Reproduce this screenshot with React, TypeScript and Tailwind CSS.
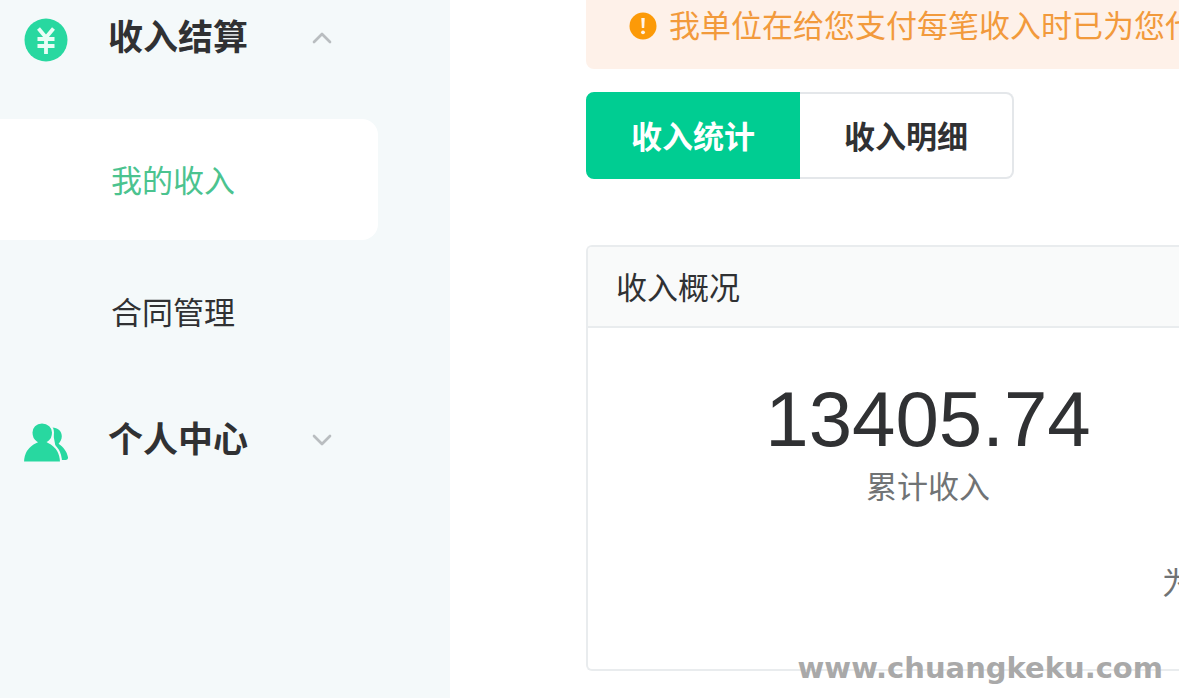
import { useState } from 'react';
import { ChevronDown, ChevronUp } from 'lucide-react';

const TABS = ['收入统计', '收入明细'];
const INCOME_ITEMS = ['我的收入', '合同管理'];

function YenIcon() {
  return (
    <svg className="size-11" viewBox="0 0 44 44" fill="none" aria-hidden="true">
      <circle cx="22" cy="22" r="21.5" fill="#28d8a0" />
      <path
        d="M14.5 10.5 22 19.5 29.5 10.5M22 19v17M13.5 21h17M13.5 28h17"
        stroke="#e9fdf6"
        strokeWidth="3.8"
      />
    </svg>
  );
}

function PeopleIcon() {
  return (
    <svg className="size-11" viewBox="0 0 44 44" fill="#28d8a0" aria-hidden="true">
      <path d="M28 7.5c6 0 9.8 3.8 9.8 8.8 0 3.4-1.6 5.600-3.200 7.400 4.400 3 8.400 7.600 9.400 13.600.2 1.600-.8 2.700-2.400 2.700H34Z" />
      {/* front figure, outlined in the sidebar colour so it stands off the back one */}
      <path
        d="M18 2.500c-6.500 0-10.500 4.500-10.500 10 0 4 1.500 7.500 4.500 9.500C4.500 25.500-1 32-1 42.500h38C37 32 31.500 25.500 24.500 22c3-2 4.500-5.500 4.500-9.500 0-5.500-4.500-10-11-10Z"
        stroke="#f4f9fa"
        strokeWidth="2"
      />
    </svg>
  );
}

function AlertIcon() {
  return (
    <svg className="size-7 shrink-0" viewBox="0 0 28 28" aria-hidden="true">
      <circle cx="14" cy="14" r="13.5" fill="#fc9a08" />
      <path d="M12.3 6h3.400l-.5 10h-2.400Z" fill="#fff3e6" />
      <circle cx="14" cy="20.3" r="1.9" fill="#fff3e6" />
    </svg>
  );
}

export default function App() {
  const [incomeOpen, setIncomeOpen] = useState(true);
  const [item, setItem] = useState(INCOME_ITEMS[0]);
  const [tab, setTab] = useState(TABS[0]);

  return (
    <div className="relative flex min-h-screen overflow-hidden bg-white font-['Liberation_Sans','Noto_Sans_CJK_SC',sans-serif] text-[#303133]">
      <aside className="w-[450px] shrink-0 bg-[#f4f9fa]">
        <nav>
          <button
            className="flex h-[76px] w-full items-center pl-6 text-left"
            aria-expanded={incomeOpen}
            onClick={() => setIncomeOpen(!incomeOpen)}
          >
            <span className="pt-1">
              <YenIcon />
            </span>
            <span className="ml-10 w-[198px] text-[35px] leading-[48px] font-bold">收入结算</span>
            {incomeOpen ? (
              <ChevronUp className="size-8 text-[#b9bdc0]" strokeWidth={2} />
            ) : (
              <ChevronDown className="size-8 text-[#b9bdc0]" strokeWidth={2} />
            )}
          </button>

          {incomeOpen && (
            <ul className="mt-[43px] mr-[72px] flex flex-col gap-[11px]">
              {INCOME_ITEMS.map((name) => (
                <li key={name}>
                  <button
                    className={`h-[121px] w-full rounded-r-2xl pt-1 pl-[111px] text-left text-[31px] leading-10 ${
                      name === item ? 'bg-white text-[#4bc38f]' : ''
                    }`}
                    onClick={() => setItem(name)}
                  >
                    {name}
                  </button>
                </li>
              ))}
            </ul>
          )}

          <button className="mt-[30px] flex h-[76px] w-full items-center pl-6 text-left" aria-expanded={false}>
            <span className="pt-1">
              <PeopleIcon />
            </span>
            <span className="ml-10 w-[198px] text-[35px] leading-[48px] font-bold">个人中心</span>
            <ChevronDown className="size-8 text-[#b9bdc0]" strokeWidth={2} />
          </button>
        </nav>
      </aside>

      <main className="min-w-0 flex-1 pl-[136px]">
        <div
          role="alert"
          className="flex h-[69px] items-start gap-3 overflow-hidden rounded-bl-lg bg-[#fef1e9] pt-1 pl-[43px] text-[31px] leading-[46px] whitespace-nowrap text-[#f29a3c]"
        >
          <span className="flex h-11 items-center">
            <AlertIcon />
          </span>
          <p>我单位在给您支付每笔收入时已为您代</p>
        </div>

        <div className="mt-[23px] flex" role="tablist">
          {TABS.map((name) => (
            <button
              key={name}
              role="tab"
              aria-selected={name === tab}
              className={`h-[87px] w-[214px] border-2 pt-1 text-[31px] leading-10 font-bold first:rounded-l-lg last:rounded-r-lg ${
                name === tab
                  ? 'border-[#00cd92] bg-[#00cd92] text-white'
                  : 'border-[#e4e7ea] bg-white first:border-r-0 last:border-l-0'
              }`}
              onClick={() => setTab(name)}
            >
              {name}
            </button>
          ))}
        </div>

        <section className="mt-[66px] h-[426px] overflow-hidden rounded-l-md border-2 border-r-0 border-[#e9ecee]">
          <h2 className="flex h-[81px] items-center border-b-2 border-[#e9ecee] bg-[#f9fafa] pt-1 pl-7 text-[31px] leading-10">
            收入概况
          </h2>
          <div className="w-[680px] pt-[46px] text-center">
            <p className="text-[78px] leading-[90px]">13405.74</p>
            <p className="mt-1 text-[31px] leading-10 text-[#707375]">累计收入</p>
          </div>
          <p className="mt-14 pl-[574px] text-[31px] leading-10 whitespace-nowrap text-[#707375]">为</p>
        </section>
      </main>

      {/* watermark */}
      <p className="absolute right-4 bottom-3 font-['DejaVu_Sans',sans-serif] text-[29px] leading-9 font-bold text-[#a9a9a9]">
        www.chuangkeku.com
      </p>
    </div>
  );
}
